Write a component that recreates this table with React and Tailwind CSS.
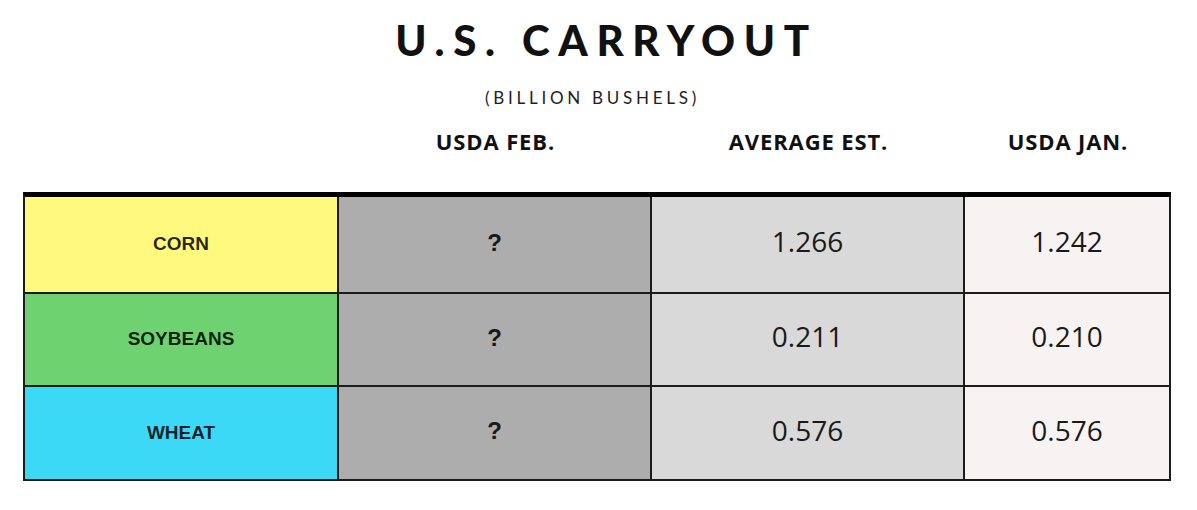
import React from 'react'

const ROWS = [
  { name: 'CORN', bg: 'bg-[#fffa7e]', avg: '1.266', jan: '1.242', h: 'h-[97px]' },
  { name: 'SOYBEANS', bg: 'bg-[#6fd271]', avg: '0.211', jan: '0.210', h: 'h-[93px]' },
  { name: 'WHEAT', bg: 'bg-[#3cd9f6]', avg: '0.576', jan: '0.576', h: 'h-[94px]' },
]

const headFont = { fontFamily: '"Open Sans", "Liberation Sans", sans-serif' }

function Row({ row }) {
  return (
    <div className={`flex ${row.h} border-b-2 border-[#1c1c1c]`}>
      <div className={`w-[314px] ${row.bg} border-r-2 border-[#1c1c1c] flex items-center justify-center`}>
        <span className="font-['Liberation_Sans',Arial,sans-serif] font-bold text-[19px] text-black/85">
          {row.name}
        </span>
      </div>
      <div className="w-[313px] bg-[#adadad] border-r-2 border-[#1c1c1c] flex items-center justify-center pb-[4px]">
        <span className="font-['Liberation_Sans',Arial,sans-serif] font-bold text-[24px] text-[#1a1a1a]">?</span>
      </div>
      <div className="w-[313px] bg-[#d9d9d9] border-r-2 border-[#1c1c1c] flex items-center justify-center pb-[7px]">
        <span className="font-['Open_Sans',sans-serif] text-[28px] text-[#1a1a1a]">{row.avg}</span>
      </div>
      <div className="w-[206px] bg-[#f6f3f2] border-r-2 border-[#1c1c1c] flex items-center justify-center pb-[7px]">
        <span className="font-['Open_Sans',sans-serif] text-[28px] text-[#1a1a1a]">{row.jan}</span>
      </div>
    </div>
  )
}

export default function App() {
  return (
    <div className="w-[1197px] h-[510px] bg-white overflow-hidden">
      <div className="pt-[16px] flex justify-center pl-[16px]">
        <h1 className="font-['Lato',sans-serif] font-black text-[42px] leading-[48px] tracking-[0.205em] text-[#111]">
          U.S. CARRYOUT
        </h1>
      </div>
      <div className="mt-[23px] flex justify-center pr-[12px]">
        <p className="font-['Lato',sans-serif] text-[17px] leading-[22px] tracking-[0.22em] text-[#1e1e1e]">
          (BILLION BUSHELS)
        </p>
      </div>
      <div className="mt-[16px] ml-[23px] flex h-[32px] items-center" style={headFont}>
        <div className="w-[316px]" />
        <div className="w-[313px] text-center font-bold text-[22px] tracking-[0.04em] text-[#111]">USDA FEB.</div>
        <div className="w-[313px] text-center font-bold text-[22px] tracking-[0.04em] text-[#111]">AVERAGE EST.</div>
        <div className="w-[206px] text-center font-bold text-[22px] tracking-[0.04em] text-[#111]">USDA JAN.</div>
      </div>
      <div className="mt-[35px] ml-[23px] w-[1148px] border-t-[5px] border-black border-l-2 border-l-[#1c1c1c]">
        {ROWS.map((r) => (
          <Row key={r.name} row={r} />
        ))}
      </div>
    </div>
  )
}
